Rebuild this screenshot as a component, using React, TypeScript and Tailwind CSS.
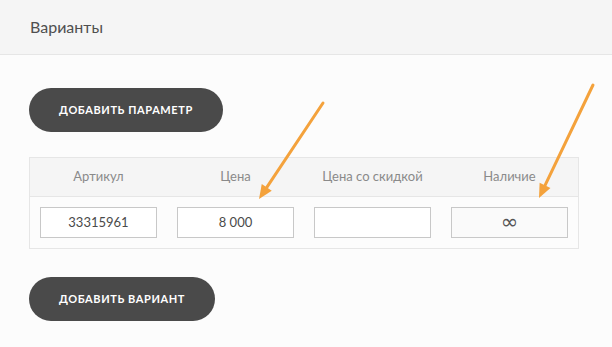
import React from "react";

const Arrow = ({ x1, y1, x2, y2 }: { x1: number; y1: number; x2: number; y2: number }) => {
  const dx = x2 - x1;
  const dy = y2 - y1;
  const len = Math.sqrt(dx * dx + dy * dy);
  const ux = dx / len;
  const uy = dy / len;
  const hl = 14;
  const hw = 6;
  const bx = x2 - ux * hl;
  const by = y2 - uy * hl;
  const p1 = `${bx - uy * hw},${by + ux * hw}`;
  const p2 = `${bx + uy * hw},${by - ux * hw}`;
  return (
    <g>
      <line x1={x1} y1={y1} x2={bx} y2={by} stroke="#f4a23c" strokeWidth={3} strokeLinecap="round" />
      <polygon points={`${x2},${y2} ${p1} ${p2}`} fill="#f4a23c" />
    </g>
  );
};

export default function App() {
  const font = { fontFamily: "Lato, 'Open Sans', 'DejaVu Sans', sans-serif" };
  return (
    <div className="relative w-[612px] h-[347px] bg-[#fcfcfc] overflow-hidden" style={font}>
      <div className="h-[55px] bg-[#f5f5f5] border-b border-[#e6e6e6] flex items-center pl-[30px]">
        <span className="text-[16px] text-[#4f4f4f]">Варианты</span>
      </div>
      <div className="pl-[29px] pt-[33px]">
        <button className="h-[44px] w-[194px] rounded-full bg-[#4a4a4a] text-white text-[11px] font-bold tracking-[0.6px] uppercase">
          Добавить параметр
        </button>
        <div className="mt-[25px] w-[550px] border border-[#e6e6e6]">
          <div className="grid grid-cols-4 h-[39px] bg-[#f5f5f5] border-b border-[#e6e6e6] items-center text-[13px] text-[#8a8a8a] text-center">
            <div>Артикул</div>
            <div>Цена</div>
            <div>Цена со скидкой</div>
            <div>Наличие</div>
          </div>
          <div className="grid grid-cols-4 h-[51px] items-center text-[13px] text-[#4a4a4a]">
            <div className="px-[10px]">
              <div className="h-[31px] w-[117px] bg-white border border-[#c8c8c8] flex items-center justify-center">33315961</div>
            </div>
            <div className="px-[10px]">
              <div className="h-[31px] w-[117px] bg-white border border-[#c8c8c8] flex items-center justify-center">8 000</div>
            </div>
            <div className="px-[10px]">
              <div className="h-[31px] w-[117px] bg-white border border-[#c8c8c8]"></div>
            </div>
            <div className="px-[10px]">
              <div className="h-[31px] w-[117px] bg-[#fafafa] border border-[#c8c8c8] flex items-center justify-center text-[21px] text-[#555]" style={{ fontFamily: "'DejaVu Sans', sans-serif" }}>∞</div>
            </div>
          </div>
        </div>
        <button className="mt-[28px] h-[44px] w-[186px] rounded-full bg-[#4a4a4a] text-white text-[11px] font-bold tracking-[0.6px] uppercase">
          Добавить вариант
        </button>
      </div>
      <svg className="absolute left-0 top-0 pointer-events-none" width={612} height={347}>
        <Arrow x1={323} y1={103} x2={259} y2={199} />
        <Arrow x1={593} y1={85} x2={539} y2={198} />
      </svg>
    </div>
  );
}
